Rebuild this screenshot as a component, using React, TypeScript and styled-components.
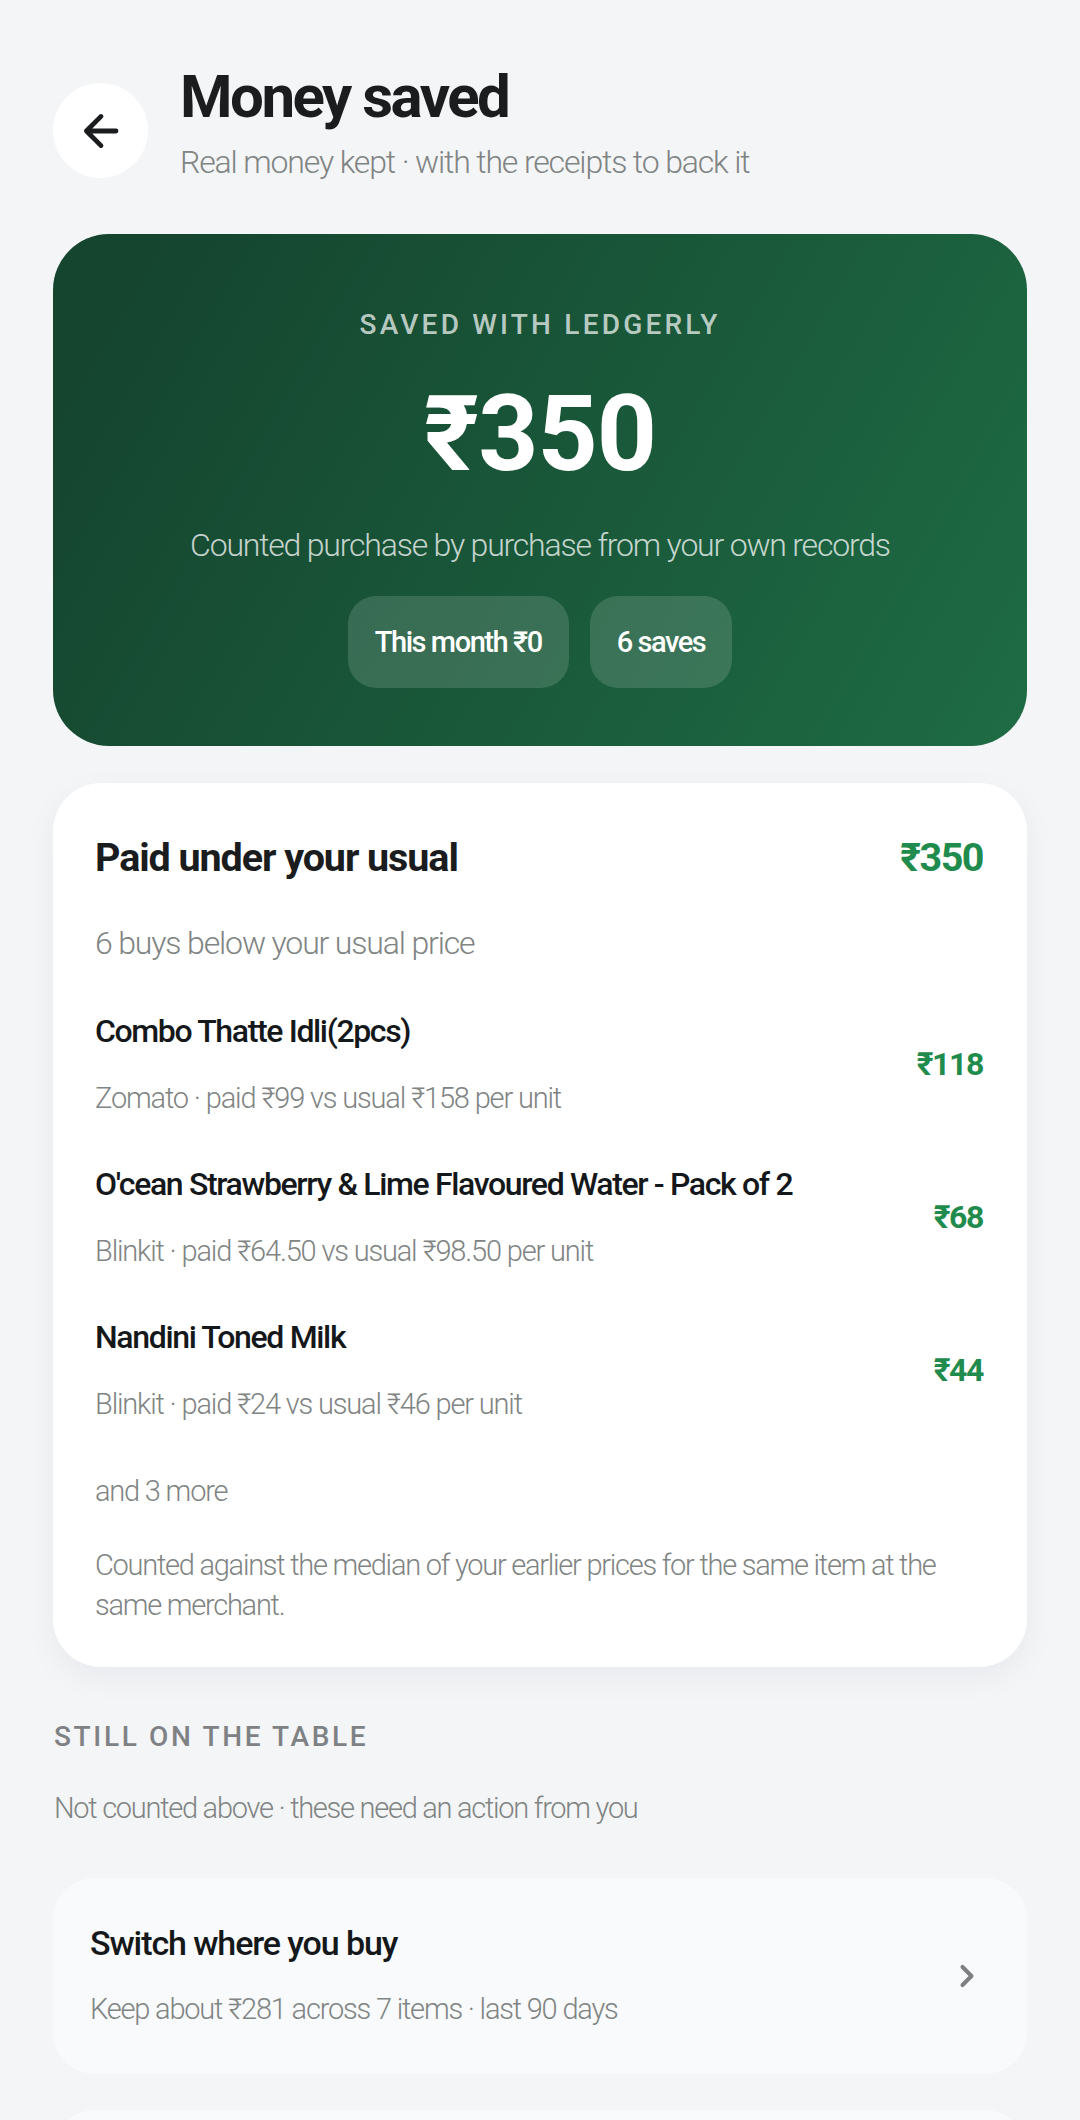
import styled, { createGlobalStyle } from "styled-components"

const GlobalStyle = createGlobalStyle`
html, body {
  margin: 0;
  padding: 0;
  height: 2120px;
  overflow: hidden;
  background: #f4f5f7;
  font-family: Roboto, "Liberation Sans", sans-serif;
}
* { box-sizing: border-box; }
`

const rows = [
  { name: "Combo Thatte Idli(2pcs)", sub: "Zomato · paid ₹99 vs usual ₹158 per unit", saved: "₹118" },
  { name: "O'cean Strawberry & Lime Flavoured Water - Pack of 2", sub: "Blinkit · paid ₹64.50 vs usual ₹98.50 per unit", saved: "₹68" },
  { name: "Nandini Toned Milk", sub: "Blinkit · paid ₹24 vs usual ₹46 per unit", saved: "₹44" },
]

const App = () => {
  return (
    <Page>
      <GlobalStyle />
      <Header>
        <BackButton>
          <svg width="50" height="50" viewBox="0 0 24 24" fill="none" stroke="#1a1c1e" strokeWidth="2.3" strokeLinecap="round" strokeLinejoin="round">
            <path d="M19.2 12H5M12 5l-7 7 7 7" />
          </svg>
        </BackButton>
        <HeaderText>
          <Title>Money saved</Title>
          <Subtitle>Real money kept · with the receipts to back it</Subtitle>
        </HeaderText>
      </Header>

      <Hero>
        <HeroLabel>SAVED WITH LEDGERLY</HeroLabel>
        <HeroAmount>₹350</HeroAmount>
        <HeroNote>Counted purchase by purchase from your own records</HeroNote>
        <ChipRow>
          <Chip>This month ₹0</Chip>
          <Chip>6 saves</Chip>
        </ChipRow>
      </Hero>

      <Card>
        <CardHead>
          <CardTitle>Paid under your usual</CardTitle>
          <CardTotal>₹350</CardTotal>
        </CardHead>
        <CardSub>6 buys below your usual price</CardSub>
        {rows.map((r) => (
          <Row key={r.name}>
            <div>
              <RowName>{r.name}</RowName>
              <RowSub>{r.sub}</RowSub>
            </div>
            <RowSaved>{r.saved}</RowSaved>
          </Row>
        ))}
        <More>and 3 more</More>
        <Footnote>Counted against the median of your earlier prices for the same item at the same merchant.</Footnote>
      </Card>

      <SectionLabel>STILL ON THE TABLE</SectionLabel>
      <SectionSub>Not counted above · these need an action from you</SectionSub>

      <ActionCard>
        <ActionText>
          <ActionTitle>Switch where you buy</ActionTitle>
          <ActionSub>Keep about ₹281 across 7 items · last 90 days</ActionSub>
        </ActionText>
        <svg width="36" height="36" viewBox="0 0 24 24" fill="none" stroke="#7d8081" strokeWidth="2.7" strokeLinecap="round" strokeLinejoin="round">
          <path d="M9 6l6 6-6 6" />
        </svg>
      </ActionCard>
      <ActionCard />
    </Page>
  )
}
export default App

const Page = styled.div`
  width: 1080px;
  padding: 60px 53px 0;
  display: flex;
  flex-direction: column;
`

const Header = styled.div`
  display: flex;
  align-items: flex-start;
  gap: 32px;
  height: 122px;
`

const BackButton = styled.div`
  width: 95px;
  height: 95px;
  margin-top: 23px;
  border-radius: 50%;
  background: #fff;
  display: flex;
  align-items: center;
  justify-content: center;
  flex-shrink: 0;
`

const HeaderText = styled.div`
  padding-top: 1px;
`

const Title = styled.div`
  font-size: 60px;
  line-height: 72px;
  font-weight: 700;
  letter-spacing: -2.5px;
  color: #1a1c1e;
`

const Subtitle = styled.div`
  margin-top: 5px;
  font-size: 32px;
  line-height: 48px;
  font-weight: 300;
  letter-spacing: -1.15px;
  color: #808483;
`

const Hero = styled.div`
  margin-top: 52px;
  height: 512px;
  border-radius: 56px;
  background: linear-gradient(120deg, #15452f 8%, #1e6c45 100%);
  display: flex;
  flex-direction: column;
  align-items: center;
  padding-top: 73px;
`

const HeroLabel = styled.div`
  font-size: 28px;
  line-height: 36px;
  font-weight: 500;
  letter-spacing: 3.2px;
  color: rgba(255, 255, 255, 0.7);
`

const HeroAmount = styled.div`
  margin-top: 32px;
  font-size: 105px;
  line-height: 120px;
  font-weight: 700;
  letter-spacing: -1px;
  color: #fff;
`

const HeroNote = styled.div`
  margin-top: 26px;
  font-size: 32px;
  line-height: 48px;
  font-weight: 300;
  letter-spacing: -1.2px;
  color: rgba(255, 255, 255, 0.75);
`

const ChipRow = styled.div`
  margin-top: 27px;
  display: flex;
  gap: 21px;
`

const Chip = styled.div`
  height: 92px;
  padding: 0 27px;
  border-radius: 28px;
  background: rgba(255, 255, 255, 0.14);
  color: #fff;
  font-size: 29px;
  font-weight: 500;
  letter-spacing: -1.45px;
  display: flex;
  align-items: center;
`

const Card = styled.div`
  margin-top: 37px;
  height: 884px;
  border-radius: 48px;
  background: #fff;
  box-shadow: 0 10px 32px rgba(20, 24, 30, 0.05);
  padding: 42px 44px 0 42px;
  display: flex;
  flex-direction: column;
`

const CardHead = styled.div`
  display: flex;
  justify-content: space-between;
  align-items: center;
  height: 64px;
`

const CardTitle = styled.div`
  font-size: 39.5px;
  font-weight: 700;
  letter-spacing: -1.08px;
  color: #1a1c1e;
`

const CardTotal = styled.div`
  font-size: 39.5px;
  font-weight: 700;
  letter-spacing: -1.5px;
  color: #1f8b4c;
`

const CardSub = styled.div`
  margin-top: 30px;
  margin-bottom: 20px;
  font-size: 32px;
  line-height: 48px;
  font-weight: 300;
  letter-spacing: -1.15px;
  color: #808483;
`

const Row = styled.div`
  display: flex;
  justify-content: space-between;
  align-items: center;
  height: 153px;
`

const RowName = styled.div`
  font-size: 32px;
  line-height: 44px;
  font-weight: 500;
  letter-spacing: -1.35px;
  color: #15181a;
`

const RowSub = styled.div`
  margin-top: 25px;
  font-size: 29px;
  line-height: 40px;
  font-weight: 300;
  letter-spacing: -1.16px;
  color: #808483;
`

const RowSaved = styled.div`
  padding-top: 1px;
  font-size: 32px;
  font-weight: 700;
  letter-spacing: -1.4px;
  color: #1f8b4c;
`

const More = styled.div`
  margin-top: 25px;
  font-size: 29px;
  line-height: 40px;
  font-weight: 300;
  letter-spacing: -1.2px;
  color: #808483;
`

const Footnote = styled.div`
  margin-top: 34px;
  font-size: 29px;
  line-height: 40px;
  font-weight: 300;
  letter-spacing: -1.25px;
  color: #808483;
`

const SectionLabel = styled.div`
  margin-top: 52px;
  margin-left: 1px;
  font-size: 28px;
  line-height: 36px;
  font-weight: 500;
  letter-spacing: 2.65px;
  color: #7f8285;
`

const SectionSub = styled.div`
  margin-top: 33px;
  margin-left: 1px;
  font-size: 29px;
  line-height: 40px;
  font-weight: 300;
  letter-spacing: -1.27px;
  color: #808483;
`

const ActionCard = styled.div`
  margin-top: 50px;
  height: 196px;
  flex-shrink: 0;
  border-radius: 42px;
  background: #f9fafc;
  padding: 0 42px 0 37px;
  display: flex;
  justify-content: space-between;
  align-items: center;
  & + & { margin-top: 36px; }
`

const ActionText = styled.div`
  margin-bottom: 2px;
`

const ActionTitle = styled.div`
  font-size: 34px;
  line-height: 44px;
  font-weight: 500;
  letter-spacing: -1.1px;
  color: #15181a;
`

const ActionSub = styled.div`
  margin-top: 24px;
  font-size: 29px;
  line-height: 40px;
  font-weight: 300;
  letter-spacing: -1.2px;
  color: #808483;
`
